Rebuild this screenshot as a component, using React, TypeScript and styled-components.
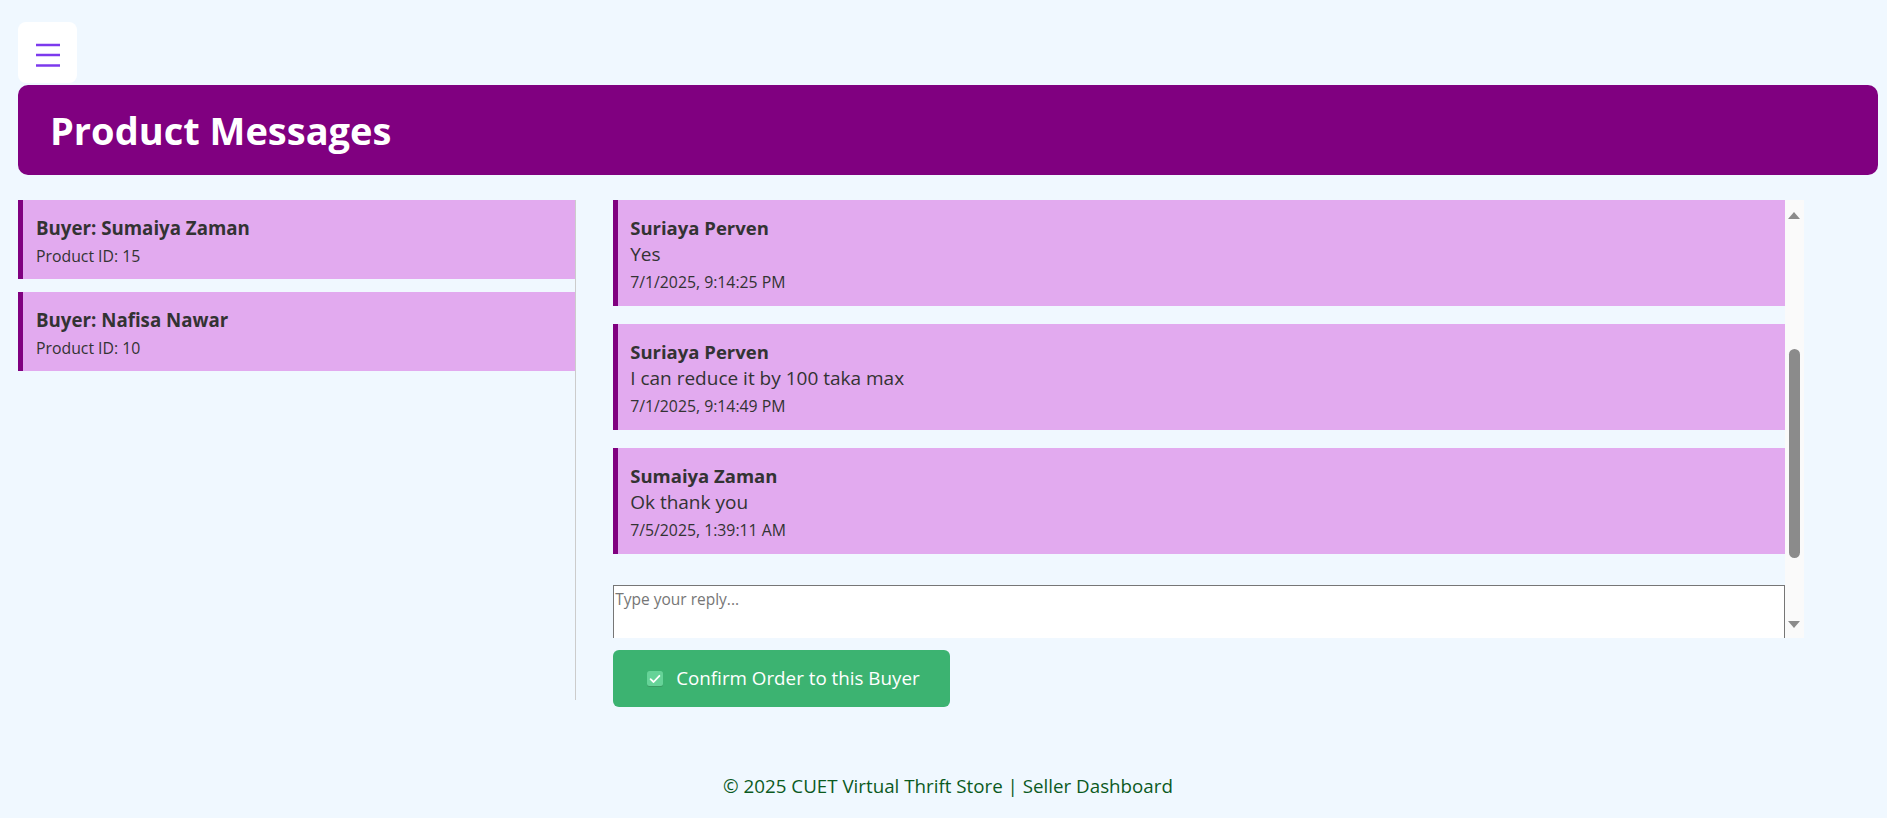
import React from "react";
import styled, { createGlobalStyle } from "styled-components";

const GlobalStyle = createGlobalStyle`
  html, body {
    margin: 0;
    padding: 0;
    background: #f0f8ff;
  }
  body {
    font-family: "Open Sans", "Noto Sans", sans-serif;
    color: #333;
  }
  * { box-sizing: border-box; }
`;

const Page = styled.div`
  padding: 22px 9px 30px 18px;
`;

const MenuButton = styled.button`
  width: 59px;
  height: 61px;
  margin: 0 0 2px 0;
  padding: 21px 0 0 0;
  border: none;
  border-radius: 8px;
  background: #ffffff;
  display: flex;
  align-items: flex-start;
  justify-content: center;
  cursor: pointer;
`;

const Header = styled.header`
  height: 90px;
  padding: 22px 32px 0;
  background: #800080;
  border-radius: 10px;
`;

const Title = styled.h1`
  margin: 0;
  font-size: 38px;
  line-height: 46px;
  font-weight: 700;
  color: #ffffff;
`;

const Content = styled.div`
  display: grid;
  grid-template-columns: 30% 64%;
  column-gap: 2%;
  align-items: start;
  margin-top: 25px;
`;

const BuyerList = styled.div`
  height: 500px;
  overflow-y: auto;
  border-right: 1px solid #cccccc;
`;

const BuyerCard = styled.div`
  background: #e2aaef;
  border-left: 5px solid #800080;
  padding: 15px 13px 12px;
  margin-bottom: 13px;
  cursor: pointer;
`;

const BuyerName = styled.div`
  font-size: 18.7px;
  line-height: 26px;
  font-weight: 700;
`;

const BuyerMeta = styled.div`
  margin-top: 4px;
  font-size: 15.8px;
  line-height: 22px;
`;

const ChatColumn = styled.div`
  display: flex;
  flex-direction: column;
  align-items: flex-start;
`;

const ChatBox = styled.div`
  display: flex;
  width: 100%;
  height: 438px;
`;

const Viewport = styled.div`
  flex: 1;
  min-width: 0;
  overflow: hidden;
`;

const ScrollTrack = styled.div`
  flex: none;
  width: 19px;
  display: flex;
  flex-direction: column;
  align-items: center;
  background: #fafafa;
`;

const ArrowUp = styled.div`
  margin-top: 12px;
  width: 0;
  height: 0;
  border-left: 6px solid transparent;
  border-right: 6px solid transparent;
  border-bottom: 7px solid #8b8b8b;
`;

const ArrowDown = styled.div`
  margin-top: auto;
  margin-bottom: 10px;
  width: 0;
  height: 0;
  border-left: 6px solid transparent;
  border-right: 6px solid transparent;
  border-top: 7px solid #8b8b8b;
`;

const Thumb = styled.div<{ $offset: number; $length: number }>`
  margin-top: ${(p) => p.$offset}px;
  width: 11px;
  height: ${(p) => p.$length}px;
  border-radius: 6px;
  background: #8b8b8b;
`;

const MessageCard = styled.div`
  background: #e2aaef;
  border-left: 5px solid #800080;
  padding: 15px 12px 13px;
  margin-bottom: 18px;
`;

const Sender = styled.div`
  font-size: 18.5px;
  line-height: 26px;
  font-weight: 700;
`;

const MessageText = styled.div`
  font-size: 19px;
  line-height: 26px;
`;

const MessageTime = styled.div`
  margin-top: 4px;
  font-size: 15.8px;
  line-height: 22px;
`;

const ReplyInput = styled.textarea`
  display: block;
  width: 100%;
  height: 100px;
  margin: 31px 0 0;
  padding: 2px 1px;
  border: 1px solid #767676;
  font-family: "Open Sans", "Noto Sans", sans-serif;
  font-size: 15.5px;
  line-height: 22px;
  color: #333;
  background: #ffffff;
  resize: vertical;

  &::placeholder {
    color: #767676;
  }
`;

const ConfirmButton = styled.button`
  margin-top: 12px;
  display: inline-flex;
  align-items: center;
  gap: 13px;
  padding: 15px 30px 15px 34px;
  border: none;
  border-radius: 6px;
  background: #3cb371;
  color: #ffffff;
  font-family: "Open Sans", "Noto Sans", sans-serif;
  font-size: 18.8px;
  line-height: 27px;
  cursor: pointer;
`;

const Footer = styled.footer`
  margin-top: 66px;
  text-align: center;
  color: #0b5a1e;
  font-size: 18.75px;
  line-height: 26px;
`;

type Message = { sender: string; text: string; time: string };

const buyers = [
  { name: "Sumaiya Zaman", productId: 15 },
  { name: "Nafisa Nawar", productId: 10 },
];

const messages: Message[] = [
  { sender: "Suriaya Perven", text: "Yes", time: "7/1/2025, 9:14:25 PM" },
  { sender: "Suriaya Perven", text: "I can reduce it by 100 taka max", time: "7/1/2025, 9:14:49 PM" },
  { sender: "Sumaiya Zaman", text: "Ok thank you", time: "7/5/2025, 1:39:11 AM" },
];

const MenuIcon = () => (
  <svg width="24" height="24" viewBox="0 0 24 24" fill="none">
    <line x1="0" y1="2" x2="24" y2="2" stroke="#7c3aed" strokeWidth="2.5" />
    <line x1="0" y1="12" x2="24" y2="12" stroke="#7c3aed" strokeWidth="2.5" />
    <line x1="0" y1="22.5" x2="24" y2="22.5" stroke="#7c3aed" strokeWidth="2.5" />
  </svg>
);

const CheckIcon = () => (
  <svg width="16" height="16" viewBox="0 0 16 16">
    <rect x="0" y="0.5" width="16" height="15.5" rx="2.5" fill="#3a9c63" />
    <rect x="0" y="0" width="16" height="15" rx="2.5" fill="#66d398" />
    <path d="M3.6 8.2 L6.6 11 L12.4 4.8" stroke="#ffffff" strokeWidth="1.8" fill="none" strokeLinecap="round" strokeLinejoin="round" />
  </svg>
);

export default function App() {
  return (
    <>
      <GlobalStyle />
      <Page>
        <MenuButton aria-label="Menu">
          <MenuIcon />
        </MenuButton>
        <Header>
          <Title>Product Messages</Title>
        </Header>
        <Content>
          <BuyerList>
            {buyers.map((b) => (
              <BuyerCard key={b.name}>
                <BuyerName>Buyer: {b.name}</BuyerName>
                <BuyerMeta>Product ID: {b.productId}</BuyerMeta>
              </BuyerCard>
            ))}
          </BuyerList>
          <ChatColumn>
            <ChatBox>
              <Viewport>
                {messages.map((m, i) => (
                  <MessageCard key={i}>
                    <Sender>{m.sender}</Sender>
                    <MessageText>{m.text}</MessageText>
                    <MessageTime>{m.time}</MessageTime>
                  </MessageCard>
                ))}
                <ReplyInput placeholder="Type your reply..." />
              </Viewport>
              <ScrollTrack aria-hidden="true">
                <ArrowUp />
                <Thumb $offset={130} $length={209} />
                <ArrowDown />
              </ScrollTrack>
            </ChatBox>
            <ConfirmButton>
              <CheckIcon />
              Confirm Order to this Buyer
            </ConfirmButton>
          </ChatColumn>
        </Content>
        <Footer>© 2025 CUET Virtual Thrift Store | Seller Dashboard</Footer>
      </Page>
    </>
  );
}
